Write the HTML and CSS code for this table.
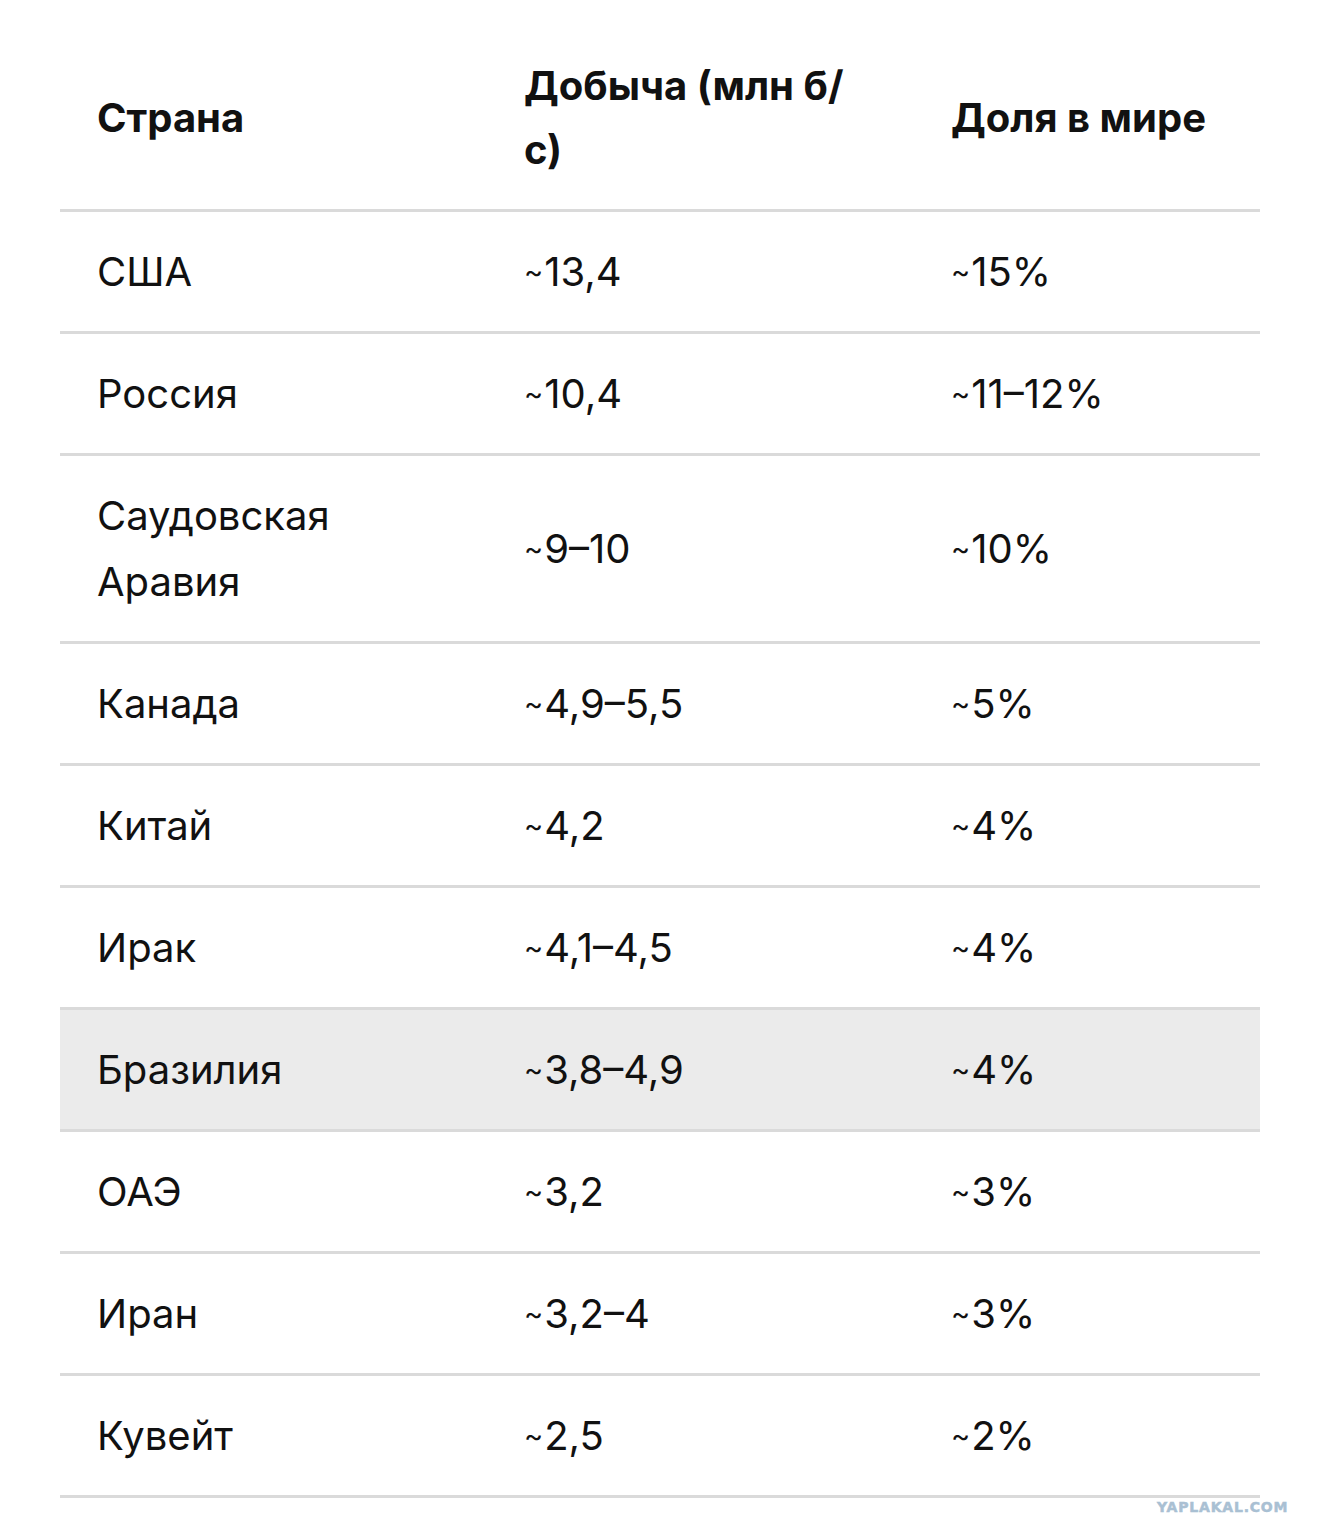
FILE: index.html
```html
<!DOCTYPE html>
<html lang="ru">
<head>
<meta charset="utf-8">
<title>Добыча нефти</title>
<link rel="stylesheet" href="styles.css">
</head>
<body>
<div class="page">
  <table class="oil">
    <thead>
      <tr>
        <th class="c1">Страна</th>
        <th class="c2">Добыча (млн б/<br>с)</th>
        <th class="c3">Доля в мире</th>
      </tr>
    </thead>
    <tbody>
      <tr><td>США</td><td><span class="t">~</span>13,4</td><td><span class="t">~</span>15%</td></tr>
      <tr><td>Россия</td><td><span class="t">~</span>10,4</td><td><span class="t">~</span>11–12%</td></tr>
      <tr><td>Саудовская<br>Аравия</td><td><span class="t">~</span>9–10</td><td><span class="t">~</span>10%</td></tr>
      <tr><td>Канада</td><td><span class="t">~</span>4,9–5,5</td><td><span class="t">~</span>5%</td></tr>
      <tr><td>Китай</td><td><span class="t">~</span>4,2</td><td><span class="t">~</span>4%</td></tr>
      <tr><td>Ирак</td><td><span class="t">~</span>4,1–4,5</td><td><span class="t">~</span>4%</td></tr>
      <tr class="hl"><td>Бразилия</td><td><span class="t">~</span>3,8–4,9</td><td><span class="t">~</span>4%</td></tr>
      <tr><td>ОАЭ</td><td><span class="t">~</span>3,2</td><td><span class="t">~</span>3%</td></tr>
      <tr><td>Иран</td><td><span class="t">~</span>3,2–4</td><td><span class="t">~</span>3%</td></tr>
      <tr><td>Кувейт</td><td><span class="t">~</span>2,5</td><td><span class="t">~</span>2%</td></tr>
    </tbody>
  </table>
  <div class="wm">YAPLAKAL.COM</div>
</div>
</body>
</html>
```

FILE: styles.css
```css
html, body {
  margin: 0;
  padding: 0;
  background: #ffffff;
}
.page {
  width: 1320px;
  height: 1537px;
  position: relative;
  font-family: Inter, Roboto, "Liberation Sans", sans-serif;
  color: #111111;
}
.oil {
  margin-left: 60px;
  width: 1200px;
  border-collapse: collapse;
  table-layout: fixed;
}
.oil th {
  font-weight: 700;
  font-size: 40px;
  line-height: 64px;
  text-align: left;
  vertical-align: middle;
  padding: 54px 37px 27px;
  border-bottom: 3px solid #dadada;
}
.oil th.c1, .oil th.c2 { width: 353px; }
.oil td {
  font-weight: 400;
  font-size: 40px;
  line-height: 66px;
  padding: 27px 37px 26px;
  border-bottom: 3px solid #dadada;
  vertical-align: middle;
}
.oil td .t {
  font-size: 29px;
  vertical-align: 4px;
  line-height: 1;
  margin-right: 1px;
}
.oil tr.hl td {
  background: #ebebeb;
}
.wm {
  position: absolute;
  left: 1157px;
  top: 1498px;
  font-family: "DejaVu Sans", "Liberation Sans", sans-serif;
  font-weight: 700;
  font-size: 14px;
  line-height: 18px;
  color: #a9c0d3;
  letter-spacing: 0.8px;
  -webkit-text-stroke: 0.5px #a9c0d3;
}
```
